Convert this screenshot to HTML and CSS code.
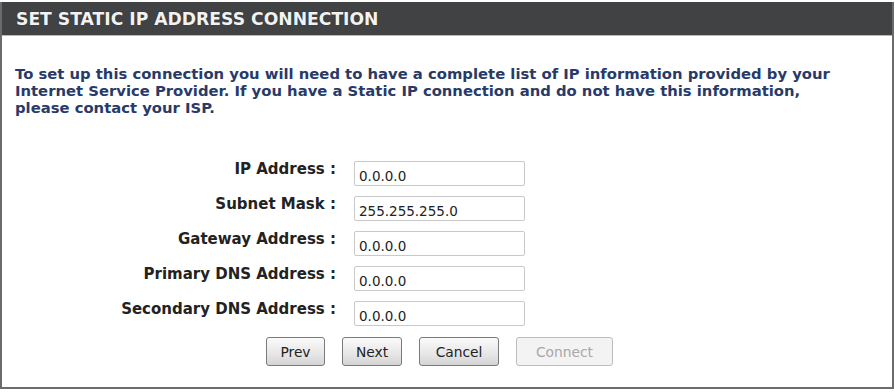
FILE: index.html
```html
<!DOCTYPE html>
<html lang="en">
<head>
    <meta charset="UTF-8">
    <title>Set Static IP Address Connection</title>
    <link rel="stylesheet" href="styles.css">
</head>
<body>

<div class="box">
    <div class="box-header">SET STATIC IP ADDRESS CONNECTION</div>
    <div class="box-body">
        <p class="intro">To set up this connection you will need to have a complete list of IP information provided by your Internet Service Provider. If you have a Static IP connection and do not have this information, please contact your ISP.</p>

        <div class="form-grid">
            <label class="field-label" for="ip">IP Address :</label>
            <input type="text" id="ip" class="input-field" value="0.0.0.0">

            <label class="field-label" for="mask">Subnet Mask :</label>
            <input type="text" id="mask" class="input-field" value="255.255.255.0">

            <label class="field-label" for="gateway">Gateway Address :</label>
            <input type="text" id="gateway" class="input-field" value="0.0.0.0">

            <label class="field-label" for="dns1">Primary DNS Address :</label>
            <input type="text" id="dns1" class="input-field" value="0.0.0.0">

            <label class="field-label" for="dns2">Secondary DNS Address :</label>
            <input type="text" id="dns2" class="input-field" value="0.0.0.0">
        </div>

        <div class="button-row">
            <button class="wiz-button btn-prev">Prev</button>
            <button class="wiz-button btn-next">Next</button>
            <button class="wiz-button btn-cancel">Cancel</button>
            <button class="wiz-button btn-connect" disabled>Connect</button>
        </div>
    </div>
</div>

</body>
</html>
```

FILE: styles.css
```css
body {
    margin: 0;
    padding-top: 2px;
    background: #fff;
    font-family: "DejaVu Sans", Verdana, sans-serif;
}
.box {
    width: 890px;
    height: 385px;
    border: 2px solid #6b6b6b;
    border-top: none;
    box-sizing: content-box;
}
.box-header {
    height: 33px;
    line-height: 34px;
    background: #404244;
    border-bottom: 1px solid #b9b9b9;
    color: #f2f2f2;
    font-size: 17.2px;
    font-weight: bold;
    padding-left: 14px;
    text-shadow: 0 0 1px #222;
}
.box-body {
    padding: 0 13px;
}
.intro {
    max-width: 822px;
    margin: 29px 0 0 0;
    color: #283a68;
    font-size: 14.8px;
    font-weight: bold;
    line-height: 17px;
}
.form-grid {
    display: grid;
    grid-template-columns: 321px 171px;
    column-gap: 18px;
    row-gap: 10px;
    margin-top: 45px;
    align-items: start;
}
.field-label {
    text-align: right;
    color: #222;
    font-size: 15px;
    font-weight: bold;
    line-height: 17px;
    white-space: nowrap;
}
.input-field {
    width: 171px;
    height: 25px;
    box-sizing: border-box;
    border: 1px solid #c9c9c9;
    border-radius: 2px;
    padding: 5px 4px 0 4px;
    font-family: "DejaVu Sans", Verdana, sans-serif;
    font-size: 13.5px;
    color: #222;
    outline: none;
}
.button-row {
    display: flex;
    gap: 17px;
    margin-top: 11px;
    padding-left: 251px;
}
.wiz-button {
    height: 29px;
    border: 1px solid #7a7a7a;
    border-radius: 3px;
    background: linear-gradient(#fafafa, #e6e6e6 60%, #d4d4d4);
    font-family: "DejaVu Sans", Verdana, sans-serif;
    font-size: 13.8px;
    color: #222;
    padding: 0;
    cursor: pointer;
}
.btn-prev {
    width: 59px;
}
.btn-next {
    width: 60px;
}
.btn-cancel {
    width: 80px;
}
.btn-connect {
    width: 97px;
    border-color: #bdbdbd;
    background: #f3f3f3;
    color: #a8a8a8;
    cursor: default;
}
```
